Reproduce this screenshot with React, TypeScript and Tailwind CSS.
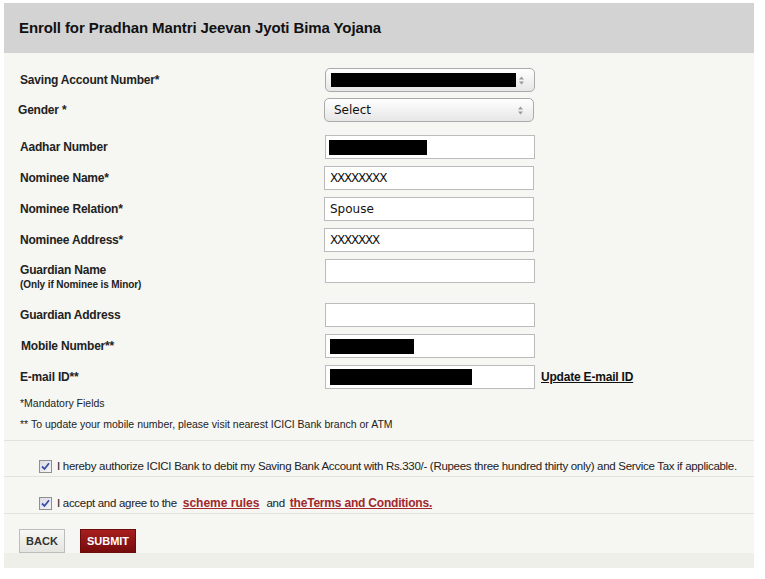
import React from "react";

const Arrows = () => (
  <svg width="7" height="11" viewBox="0 0 7 11" className="absolute right-[9px] top-[6px]">
    <path d="M3.5 1.5 L6 4.5 L1 4.5 Z" fill="#9a9a9a" />
    <path d="M3.5 9.5 L6 6.5 L1 6.5 Z" fill="#9a9a9a" />
  </svg>
);

const SelectBox = ({ children, className = "" }: { children?: React.ReactNode; className?: string }) => (
  <div
    className={
      "relative h-[24px] w-[210px] rounded-[5px] border border-[#aaaaaa] bg-gradient-to-b from-[#ffffff] to-[#e6e6e6] flex items-center " +
      className
    }
  >
    {children}
    <Arrows />
  </div>
);

const TextBox = ({ children, className = "" }: { children?: React.ReactNode; className?: string }) => (
  <div
    className={
      "h-[24px] w-[210px] border border-[#bbbbbb] bg-white flex items-center text-[12px] text-[#111] [font-family:'DejaVu_Sans',sans-serif] " +
      className
    }
  >
    {children}
  </div>
);

const Label = ({ children, className = "" }: { children: React.ReactNode; className?: string }) => (
  <div className={"w-[305px] shrink-0 text-[12px] font-bold tracking-[-0.2px] text-[#222] " + className}>{children}</div>
);

const Check = () => (
  <span className="inline-flex h-[13px] w-[13px] shrink-0 items-center justify-center border border-[#8e8f8f] bg-gradient-to-br from-[#dcdde3] to-[#f5f5f8]">
    <svg width="9" height="9" viewBox="0 0 9 9">
      <path d="M1 4.5 L3.5 7 L8 1.2" stroke="#3b4fa6" strokeWidth="1.8" fill="none" />
    </svg>
  </span>
);

export default function App() {
  return (
    <div className="min-h-[579px] bg-white pt-[3px] pl-[4px] [font-family:'Liberation_Sans',Arial,sans-serif]">
      <div className="w-[750px]">
        <div className="h-[50px] bg-[#d3d3d3] flex items-center pl-[15px]">
          <h1 className="text-[15px] font-bold text-[#111] tracking-[-0.1px]">
            Enroll for Pradhan Mantri Jeevan Jyoti Bima Yojana
          </h1>
        </div>
        <div className="bg-[#f6f6f2]">
          <div className="pl-[16px] pt-[15px] pb-[9px]">
            <div className="flex items-center">
              <Label>Saving Account Number*</Label>
              <SelectBox>
                <div className="ml-[5px] h-[14px] w-[185px] bg-black" />
              </SelectBox>
            </div>
            <div className="mt-[6px] flex items-center">
              <Label className="-ml-[2px] mr-[1px]">Gender *</Label>
              <SelectBox>
                <span className="pl-[9px] text-[12px] text-[#111] [font-family:'DejaVu_Sans',sans-serif]">Select</span>
              </SelectBox>
            </div>
            <div className="mt-[13px] flex items-center">
              <Label>Aadhar Number</Label>
              <TextBox>
                <div className="ml-[3px] h-[15px] w-[98px] bg-black" />
              </TextBox>
            </div>
            <div className="mt-[7px] flex items-center">
              <Label>Nominee Name*</Label>
              <TextBox className="-ml-[1px] pl-[5px] tracking-[-1.2px]">XXXXXXXX</TextBox>
            </div>
            <div className="mt-[7px] flex items-center">
              <Label>Nominee Relation*</Label>
              <TextBox className="-ml-[1px] pl-[5px]">Spouse</TextBox>
            </div>
            <div className="mt-[7px] flex items-center">
              <Label>Nominee Address*</Label>
              <TextBox className="-ml-[1px] pl-[5px] tracking-[-1.2px]">XXXXXXX</TextBox>
            </div>
            <div className="mt-[7px] flex items-start">
              <Label className="pt-[4px]">
                <div className="leading-[14px]">Guardian Name</div>
                <div className="text-[10px] leading-[14px] mt-[1px] tracking-[-0.1px]">(Only if Nominee is Minor)</div>
              </Label>
              <TextBox />
            </div>
            <div className="mt-[11px] flex items-center">
              <Label>Guardian Address</Label>
              <TextBox />
            </div>
            <div className="mt-[7px] flex items-center">
              <Label className="pl-[1px]">Mobile Number**</Label>
              <TextBox>
                <div className="ml-[4px] h-[15px] w-[84px] bg-black" />
              </TextBox>
            </div>
            <div className="mt-[7px] flex items-center">
              <Label>E-mail ID**</Label>
              <TextBox>
                <div className="ml-[4px] h-[16px] w-[142px] bg-black" />
              </TextBox>
              <a className="ml-[6px] text-[12px] font-bold tracking-[-0.2px] text-[#111] underline">Update E-mail ID</a>
            </div>
            <div className="mt-[7px] text-[10.5px] leading-[14px] text-[#222]">*Mandatory Fields</div>
            <div className="mt-[7px] text-[10.5px] leading-[14px] text-[#222]">
              ** To update your mobile number, please visit nearest ICICI Bank branch or ATM
            </div>
          </div>
          <div className="border-t border-[#e3e3de]">
            <div className="pl-[35px] pt-[18px] pb-[3px] flex items-center gap-[5px] text-[11.5px] tracking-[-0.3px] leading-[14px] text-[#222] whitespace-nowrap">
              <Check />
              <span>
                I hereby authorize ICICI Bank to debit my Saving Bank Account with Rs.330/- (Rupees three hundred thirty only) and Service Tax if applicable.
              </span>
            </div>
          </div>
          <div className="border-t border-[#e3e3de]">
            <div className="pl-[35px] pt-[19px] pb-[3px] flex items-center text-[11.5px] tracking-[-0.3px] leading-[14px] text-[#222] whitespace-nowrap">
              <Check />
              <span className="ml-[5px]">I accept and agree to the</span>
              <a className="ml-[6px] text-[12px] tracking-[0px] font-bold text-[#a0282c] underline">scheme rules</a>
              <span className="ml-[7px]">and</span>
              <a className="ml-[5px] text-[12px] tracking-[-0.2px] font-bold text-[#a0282c] underline">theTerms and Conditions.</a>
            </div>
          </div>
          <div className="border-t border-[#e3e3de] pl-[15px] pt-[15px] flex gap-[15px]">
            <button className="h-[24px] w-[46px] border border-[#bdbdbd] bg-gradient-to-b from-[#f7f7f4] to-[#e4e4e0] text-[11px] font-bold text-[#333]">
              BACK
            </button>
            <button className="h-[24px] w-[56px] border border-[#6e0b0b] bg-gradient-to-b from-[#a81e1e] to-[#760c0c] text-[11px] font-bold text-white">
              SUBMIT
            </button>
          </div>
          <div className="h-[15px] bg-[#efefea]" />
        </div>
      </div>
    </div>
  );
}
